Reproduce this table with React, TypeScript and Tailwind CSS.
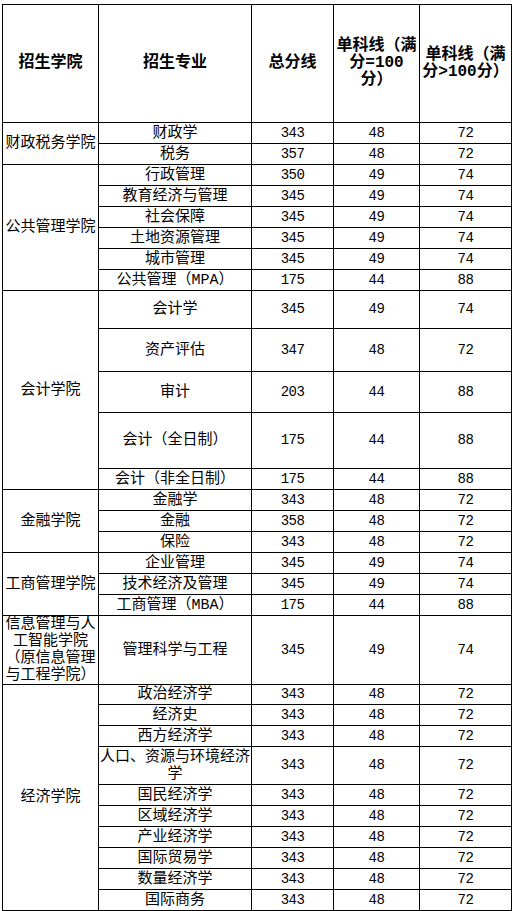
type Row = { major: string; total: string; s1: string; s2: string; h: number };
type Group = { college: string; rows: Row[] };

const r = (major: string, total: string, s1: string, s2: string, h = 21): Row => ({ major, total, s1, s2, h });

const groups: Group[] = [
  { college: "财政税务学院", rows: [r("财政学", "343", "48", "72"), r("税务", "357", "48", "72")] },
  {
    college: "公共管理学院",
    rows: [
      r("行政管理", "350", "49", "74"),
      r("教育经济与管理", "345", "49", "74"),
      r("社会保障", "345", "49", "74"),
      r("土地资源管理", "345", "49", "74"),
      r("城市管理", "345", "49", "74"),
      r("公共管理（MPA）", "175", "44", "88"),
    ],
  },
  {
    college: "会计学院",
    rows: [
      r("会计学", "345", "49", "74", 38),
      r("资产评估", "347", "48", "72", 43),
      r("审计", "203", "44", "88", 41),
      r("会计（全日制）", "175", "44", "88", 56),
      r("会计（非全日制）", "175", "44", "88"),
    ],
  },
  {
    college: "金融学院",
    rows: [r("金融学", "343", "48", "72"), r("金融", "358", "48", "72"), r("保险", "343", "48", "72")],
  },
  {
    college: "工商管理学院",
    rows: [
      r("企业管理", "345", "49", "74"),
      r("技术经济及管理", "345", "49", "74"),
      r("工商管理（MBA）", "175", "44", "88"),
    ],
  },
  {
    college: "信息管理与人\n工智能学院\n（原信息管理\n与工程学院）",
    rows: [r("管理科学与工程", "345", "49", "74", 67)],
  },
  {
    college: "经济学院",
    rows: [
      r("政治经济学", "343", "48", "72", 20),
      r("经济史", "343", "48", "72"),
      r("西方经济学", "343", "48", "72"),
      r("人口、资源与环境经济\n学", "343", "48", "72", 38),
      r("国民经济学", "343", "48", "72"),
      r("区域经济学", "343", "48", "72"),
      r("产业经济学", "343", "48", "72"),
      r("国际贸易学", "343", "48", "72"),
      r("数量经济学", "343", "48", "72"),
      r("国际商务", "343", "48", "72"),
    ],
  },
  { college: "", rows: [r("", "", "", "", 21)] },
];

function Lines({ text }: { text: string }) {
  const parts = text.split("\n");
  return (
    <>
      {parts.map((p, i) => (
        <span key={i}>
          {p}
          {i < parts.length - 1 && <br />}
        </span>
      ))}
    </>
  );
}

const cell = "border border-black text-center align-middle p-0";
const num = "border border-black text-center align-middle p-0 font-['Liberation_Mono',monospace] text-[14px] tracking-[-0.5px]";

export default function App() {
  return (
    <div
      className="h-[911px] w-[513px] overflow-hidden bg-white pl-[2px] pt-[4px] text-black"
      style={{ fontFamily: '"Liberation Mono", "Noto Sans CJK SC", sans-serif' }}
    >
      <table className="w-[510px] table-fixed border-collapse text-[15px] leading-[17px]">
        <colgroup>
          <col className="w-[96px]" />
          <col className="w-[153px]" />
          <col className="w-[82px]" />
          <col className="w-[86px]" />
          <col className="w-[92px]" />
        </colgroup>
        <thead>
          <tr className="h-[118px] text-[16px] font-bold">
            <th className={cell}>招生学院</th>
            <th className={cell}>招生专业</th>
            <th className={cell}>总分线</th>
            <th className={cell}>
              单科线（满
              <br />
              分=100
              <br />
              分）
            </th>
            <th className={cell}>
              单科线（满
              <br />
              分&gt;100分）
            </th>
          </tr>
        </thead>
        <tbody>
          {groups.map((g, gi) =>
            g.rows.map((row, ri) => (
              <tr key={`${gi}-${ri}`} style={{ height: row.h }}>
                {ri === 0 && (
                  <td rowSpan={g.rows.length} className={cell}>
                    <Lines text={g.college} />
                  </td>
                )}
                <td className={cell}>
                  <Lines text={row.major} />
                </td>
                <td className={num}>{row.total}</td>
                <td className={num}>{row.s1}</td>
                <td className={num}>{row.s2}</td>
              </tr>
            ))
          )}
        </tbody>
      </table>
    </div>
  );
}
